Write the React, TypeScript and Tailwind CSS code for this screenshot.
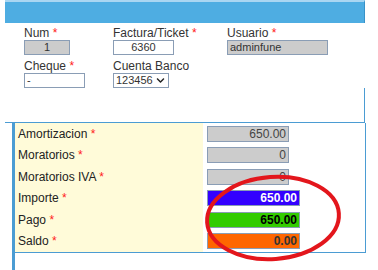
import { FaChevronDown } from "react-icons/fa";

const font = { fontFamily: '"Liberation Sans", Arial, sans-serif' };

function Req({ text }: { text: string }) {
  return (
    <span>
      {text} <span className="text-[#ff2020]">*</span>
    </span>
  );
}

const rows = [
  { label: "Amortizacion", value: "650.00", cls: "w-[82px] bg-[#cccccc] text-[#444]" },
  { label: "Moratorios", value: "0", cls: "w-[82px] bg-[#cccccc] text-[#444]" },
  { label: "Moratorios IVA", value: "0", cls: "w-[82px] bg-[#cccccc] text-[#444]" },
  { label: "Importe", value: "650.00", cls: "w-[93px] bg-[#3300ff] text-white font-bold" },
  { label: "Pago", value: "650.00", cls: "w-[93px] bg-[#33cc00] text-black font-bold" },
  { label: "Saldo", value: "0.00", cls: "w-[93px] bg-[#ff6600] text-[#333] font-bold" },
];

export default function App() {
  return (
    <div className="relative w-[378px] h-[270px] bg-white overflow-hidden text-[12px] text-[#333]" style={font}>
      {/* header bar */}
      <div className="ml-[5px] w-[360px] h-[23px] bg-[#4eade2] border-t-2 border-t-[#a9d6f2] border-r border-r-[#3892c8]" />

      {/* form */}
      <div className="pl-[24px] pt-[4px] grid grid-cols-[89px_114px_110px] gap-y-[5px]">
        <div>
          <div className="leading-[13px]"><Req text="Num" /></div>
          <div className="w-[46px] h-[15px] bg-[#cccccc] border border-[#8a9db5] text-center text-[11px] leading-[13px]">1</div>
        </div>
        <div>
          <div className="leading-[13px]"><Req text="Factura/Ticket" /></div>
          <div className="w-[61px] h-[15px] bg-white border border-[#8a9db5] text-center text-[11px] leading-[13px]">6360</div>
        </div>
        <div>
          <div className="leading-[13px]"><Req text="Usuario" /></div>
          <div className="w-[101px] h-[15px] bg-[#cccccc] border border-[#8a9db5] pl-[2px] text-[11px] leading-[13px]">adminfune</div>
        </div>
        <div>
          <div className="leading-[13px]"><Req text="Cheque" /></div>
          <div className="w-[61px] h-[15px] bg-white border border-[#8a9db5] pl-[2px] text-[11px] leading-[13px]">-</div>
        </div>
        <div>
          <div className="leading-[13px]">Cuenta Banco</div>
          <div className="w-[56px] h-[15px] bg-white border border-[#8a9db5] pl-[2px] flex items-center gap-[3px] text-[11px] leading-[13px]">
            <span>123456</span>
            <FaChevronDown className="text-[9px] text-[#222]" />
          </div>
        </div>
      </div>

      {/* empty framed strip */}
      <div className="ml-[5px] w-[360px] h-[35px] border-r border-b border-[#4b9cd3]" />

      {/* amounts table */}
      <div className="ml-[12px] w-[354px] border-l-[3px] border-r border-b border-[#4b9cd3] flex">
        <div className="w-[188px] bg-[#fffbd9] pl-[3px] grid grid-rows-6">
          {rows.map((r) => (
            <div key={r.label} className="h-[21.5px] flex items-center text-[#222]">
              <Req text={r.label} />
            </div>
          ))}
        </div>
        <div className="flex-1 pl-[4px] grid grid-rows-6">
          {rows.map((r) => (
            <div key={r.label} className="h-[21.5px] flex items-center">
              <div className={`h-[16px] border border-[#8a9db5] text-right pr-[2px] leading-[14px] ${r.cls}`}>{r.value}</div>
            </div>
          ))}
        </div>
      </div>
      <div className="ml-[12px] h-[20px] border-l-[3px] border-[#4b9cd3]" />

      {/* red annotation ellipse */}
      <svg className="absolute left-0 top-0 pointer-events-none" width="378" height="270">
        <ellipse cx="273" cy="218" rx="66" ry="41" transform="rotate(-4 273 218)" fill="none" stroke="#e3161c" strokeWidth="4" />
      </svg>
    </div>
  );
}
